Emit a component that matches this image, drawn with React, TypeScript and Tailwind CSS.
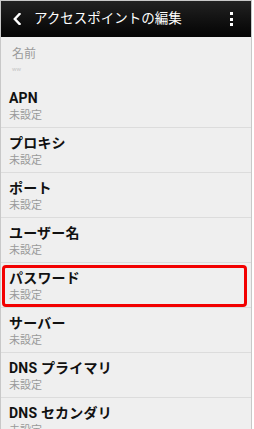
import React from 'react';

const font = { fontFamily: 'Roboto, "Noto Sans CJK JP", sans-serif' };

const rows = [
  { title: 'APN' },
  { title: 'プロキシ' },
  { title: 'ポート' },
  { title: 'ユーザー名' },
  { title: 'パスワード', marked: true },
  { title: 'サーバー' },
  { title: 'DNS プライマリ' },
  { title: 'DNS セカンダリ' },
];

function Row({ title, marked }: { title: string; marked?: boolean }) {
  return (
    <div className="relative h-[45px] shrink-0 border-b border-[#dcdcdc] px-[8px] pt-[6px] flex flex-col">
      <div className="text-[14px] leading-[18px] font-bold text-[#111] tracking-[0.2px]">{title}</div>
      <div className="text-[11px] leading-[14px] mt-[2px] text-[#9a9a9a]">未設定</div>
      {marked && (
        <div className="absolute left-[1px] right-[4px] top-[2px] bottom-[0px] border-[3px] border-[#f20000] rounded-[4px]" />
      )}
    </div>
  );
}

export default function App() {
  return (
    <div className="w-[254px] h-[429px] bg-white overflow-hidden" style={font}>
      <div className="w-[252px] h-[429px] border-t border-l border-r border-[#c8c8c8] bg-[#efefef] flex flex-col overflow-hidden">
        <div className="h-[36px] shrink-0 bg-gradient-to-b from-[#222] to-[#050505] flex items-center text-white">
          <svg width="8" height="12" viewBox="0 0 8 12" className="ml-[12px]">
            <path d="M6.5 1 L1.8 6 L6.5 11" fill="none" stroke="white" strokeWidth="2.4" strokeLinecap="square" />
          </svg>
          <div className="ml-[13px] text-[13.5px] leading-none tracking-[0px]">アクセスポイントの編集</div>
          <div className="ml-auto mr-[18px] flex flex-col gap-[2.5px]">
            <div className="w-[3px] h-[3px] bg-white" />
            <div className="w-[3px] h-[3px] bg-white" />
            <div className="w-[3px] h-[3px] bg-white" />
          </div>
        </div>
        <div className="h-[46px] shrink-0 px-[11px] pt-[9px]">
          <div className="text-[12px] leading-[16px] text-[#9a9a9a]">名前</div>
          <div className="text-[6px] leading-[8px] mt-[3px] text-[#c4c4c4]">ww</div>
        </div>
        {rows.map((r) => (
          <Row key={r.title} title={r.title} marked={r.marked} />
        ))}
      </div>
    </div>
  );
}
